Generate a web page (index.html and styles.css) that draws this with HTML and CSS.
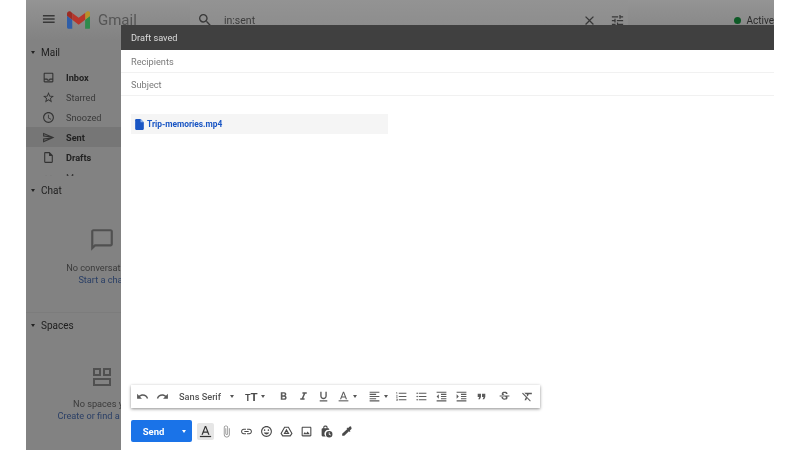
FILE: index.html
```html
<!DOCTYPE html>
<html>
<head>
  <link rel="stylesheet" href="styles.css">
</head>
<body>
  <div class="screen">
    <div class="gmail">
      <div class="topbar">
        <svg class="menu-icon" width="16" height="16" viewBox="0 0 24 24"><path d="M3 18h18v-2H3v2zm0-5h18v-2H3v2zm0-7v2h18V6H3z"/></svg>
        <svg class="logo" width="24" height="18" viewBox="0 0 24 18">
          <path fill="#2f5ea8" d="M1.6 18h3.8V8.8L0 4.7v11.7C0 17.3.7 18 1.6 18z"/>
          <path fill="#2f8a4c" d="M18.6 18h3.8c.9 0 1.6-.7 1.6-1.6V4.7l-5.4 4.1z"/>
          <path fill="#b8912a" d="M18.6 1.7v7.1L24 4.7V2.500c0-2-2.300-3.200-3.900-2z"/>
          <path fill="#b8352b" d="M5.400 8.800V1.700L12 6.700l6.600-5v7.100L12 13.800z"/>
          <path fill="#9c2c24" d="M0 2.500v2.200l5.400 4.100V1.700L3.900.5C2.300-.7 0 .5 0 2.500z"/>
        </svg>
        <span class="wordmark">Gmail</span>
        <div class="search">
          <svg class="search-icon" width="16" height="16" viewBox="0 0 24 24"><path d="M15.500 14h-.79l-.28-.27A6.470 6.470 0 0 0 16 9.500 6.500 6.500 0 1 0 9.500 16c1.610 0 3.090-.59 4.230-1.570l.27.28v.79l5 4.990L20.490 19l-4.990-5zm-6 0C7.010 14 5 11.990 5 9.500S7.010 5 9.500 5 14 7.010 14 9.500 11.990 14 9.500 14z"/></svg>
          <span class="search-text">in:sent</span>
          <svg class="search-close" width="15" height="15" viewBox="0 0 24 24"><path d="M19 6.410 17.590 5 12 10.590 6.410 5 5 6.410 10.590 12 5 17.590 6.410 19 12 13.410 17.590 19 19 17.590 13.410 12z"/></svg>
          <svg class="search-tune" width="15" height="15" viewBox="0 0 24 24"><path d="M3 17v2h6v-2H3zM3 5v2h10V5H3zm10 16v-2h8v-2h-8v-2h-2v6h2zM7 9v2H3v2h4v2h2V9H7zm14 4v-2H11v2h10zm-6-4h2V7h4V5h-4V3h-2v6z"/></svg>
        </div>
        <div class="status"><span class="status-dot"></span>Active</div>
      </div>

      <div class="sidebar">
        <div class="section-head mail-head"><span class="caret"></span>Mail</div>
        <div class="nav">
          <div class="nav-row bold">
            <svg viewBox="0 0 24 24"><path d="M19 3H5c-1.100 0-2 .9-2 2v14c0 1.100.9 2 2 2h14c1.100 0 2-.9 2-2V5c0-1.100-.9-2-2-2zm0 16H5v-3h3.560c.69 1.190 1.970 2 3.450 2s2.750-.81 3.450-2H19v3zm0-5h-4.990c0 1.100-.9 2-2 2s-2-.9-2-2H5V5h14v9z"/></svg>
            Inbox
          </div>
          <div class="nav-row">
            <svg viewBox="0 0 24 24"><path d="m22 9.240-7.190-.62L12 2 9.190 8.630 2 9.240l5.460 4.730L5.820 21 12 17.270 18.180 21l-1.630-7.030L22 9.240zM12 15.400l-3.760 2.270 1-4.280-3.320-2.880 4.380-.38L12 6.100l1.710 4.040 4.380.38-3.320 2.880 1 4.280L12 15.400z"/></svg>
            Starred
          </div>
          <div class="nav-row">
            <svg viewBox="0 0 24 24"><path d="M11.990 2C6.470 2 2 6.480 2 12s4.470 10 9.990 10C17.520 22 22 17.520 22 12S17.520 2 11.990 2zM12 20c-4.420 0-8-3.580-8-8s3.580-8 8-8 8 3.580 8 8-3.580 8-8 8zm.5-13H11v6l5.250 3.150.75-1.230-4.500-2.670z"/></svg>
            Snoozed
          </div>
          <div class="nav-row bold active">
            <svg viewBox="0 0 24 24"><path d="M4.010 6.030l7.510 3.220-7.520-1 .01-2.220m7.500 8.720L4 17.970v-2.220l7.510-1M2.010 3 2 10l15 2-15 2 .01 7L23 12 2.010 3z"/></svg>
            Sent
          </div>
          <div class="nav-row bold">
            <svg viewBox="0 0 24 24"><path d="M14 2H6c-1.100 0-2 .9-2 2v16c0 1.100.9 2 2 2h12c1.100 0 2-.9 2-2V8l-6-6zm4 18H6V4h7v5h5v11z"/></svg>
            Drafts
          </div>
          <div class="nav-row">
            <svg viewBox="0 0 24 24"><path d="M7.410 8.590 12 13.170l4.590-4.580L18 10l-6 6-6-6z"/></svg>
            More
          </div>
        </div>

        <div class="panel chat-panel">
          <div class="section-head"><span class="caret"></span>Chat</div>
          <svg class="panel-icon" width="26" height="26" viewBox="0 0 24 24"><path d="M20 2H4c-1.100 0-2 .9-2 2v18l4-4h14c1.100 0 2-.9 2-2V4c0-1.100-.9-2-2-2zm0 14H5.170L4 17.170V4h16v12z"/></svg>
          <div class="panel-text">No conversations</div>
          <div class="panel-link">Start a chat</div>
        </div>

        <div class="panel spaces-panel">
          <div class="section-head"><span class="caret"></span>Spaces</div>
          <svg class="panel-icon" width="24" height="24" viewBox="0 0 24 24"><path d="M3 3h8v8H3zm2 2v4h4V5zm8-2h8v8h-8zm2 2v4h4V5zM3 13h18v8H3zm2 2v4h14v-4z"/></svg>
          <div class="panel-text">No spaces yet</div>
          <div class="panel-link">Create or find a space</div>
        </div>
      </div>
    </div>

    <div class="compose">
      <div class="compose-head">Draft saved</div>
      <div class="compose-field">Recipients</div>
      <div class="compose-field">Subject</div>
      <div class="compose-body">
        <div class="attachment">
          <svg width="13" height="13" viewBox="0 0 24 24"><path fill="#1a56c4" d="M14 2H6c-1.100 0-2 .9-2 2v16c0 1.100.9 2 2 2h12c1.100 0 2-.9 2-2V8z"/><path fill="#8ab0ea" d="M14 2v6h6z"/></svg>
          <span>Trip-memories.mp4</span>
        </div>
      </div>

      <div class="format-bar">
        <span class="cell"><svg viewBox="0 0 24 24"><path d="M12.500 8c-2.650 0-5.050.99-6.900 2.600L2 7v9h9l-3.620-3.620c1.390-1.160 3.160-1.880 5.120-1.880 3.540 0 6.550 2.310 7.600 5.500l2.370-.78C21.080 11.030 17.150 8 12.500 8z"/></svg></span>
        <span class="cell"><svg viewBox="0 0 24 24"><path d="M18.400 10.600C16.550 8.990 14.150 8 11.500 8c-4.650 0-8.580 3.030-9.960 7.220L3.900 16c1.050-3.190 4.050-5.500 7.600-5.500 1.950 0 3.730.72 5.120 1.880L13 16h9V7z"/></svg></span>
        <span class="font-name">Sans Serif</span>
        <span class="drop font-drop"></span>
        <span class="size-icon"><small>T</small>T</span>
        <span class="drop size-drop"></span>
        <span class="cell bold-cell"><svg viewBox="0 0 24 24"><path d="M15.600 10.790c.97-.67 1.650-1.770 1.650-2.790 0-2.260-1.750-4-4-4H7v14h7.040c2.090 0 3.710-1.700 3.710-3.790 0-1.520-.86-2.820-2.150-3.420zM10 6.500h3c.83 0 1.500.67 1.500 1.500s-.67 1.500-1.500 1.500h-3v-3zm3.500 9H10v-3h3.500c.83 0 1.500.67 1.500 1.500s-.67 1.500-1.500 1.500z"/></svg></span>
        <span class="cell"><svg viewBox="0 0 24 24"><path d="M10 4v3h2.210l-3.420 8H6v3h8v-3h-2.210l3.420-8H18V4z"/></svg></span>
        <span class="cell"><svg viewBox="0 0 24 24"><path d="M12 17c3.310 0 6-2.690 6-6V3h-2.500v8c0 1.930-1.570 3.500-3.500 3.500S8.500 12.930 8.500 11V3H6v8c0 3.310 2.690 6 6 6zm-7 2v2h14v-2H5z"/></svg></span>
        <span class="cell"><svg viewBox="0 0 24 24"><path d="M11 3 5.500 17h2.250l1.120-3h6.250l1.120 3h2.250L13 3h-2zm-1.380 9L12 5.670 14.380 12H9.620z"/><path d="M3 19h18v2H3z"/></svg></span>
        <span class="drop no-gap"></span>
        <span class="cell align-cell"><svg viewBox="0 0 24 24"><path d="M15 15H3v2h12v-2zm0-8H3v2h12V7zM3 13h18v-2H3v2zm0 8h18v-2H3v2zM3 3v2h18V3H3z"/></svg></span>
        <span class="drop no-gap"></span>
        <span class="cell list-cell"><svg viewBox="0 0 24 24"><path d="M2 17h2v.5H3v1h1v.5H2v1h3v-4H2v1zm1-9h1V4H2v1h1v3zm-1 3h1.800L2 13.100v.9h3v-1H3.200L5 10.900V10H2v1zm5-6v2h14V5H7zm0 14h14v-2H7v2zm0-6h14v-2H7v2z"/></svg></span>
        <span class="cell"><svg viewBox="0 0 24 24"><path d="M4 10.500c-.83 0-1.500.67-1.500 1.500s.67 1.500 1.500 1.500 1.500-.67 1.500-1.500-.67-1.500-1.500-1.500zm0-6c-.83 0-1.500.67-1.500 1.500S3.170 7.500 4 7.500 5.500 6.830 5.500 6 4.830 4.500 4 4.500zm0 12c-.83 0-1.500.68-1.500 1.500s.68 1.500 1.500 1.500 1.500-.68 1.500-1.500-.67-1.500-1.500-1.500zM7 19h14v-2H7v2zm0-6h14v-2H7v2zm0-8v2h14V5H7z"/></svg></span>
        <span class="cell"><svg viewBox="0 0 24 24"><path d="M11 17h10v-2H11v2zm-8-5 4 4V8l-4 4zm0 9h18v-2H3v2zM3 3v2h18V3H3zm8 6h10V7H11v2zm0 4h10v-2H11v2z"/></svg></span>
        <span class="cell"><svg viewBox="0 0 24 24"><path d="M3 21h18v-2H3v2zM3 8v8l4-4-4-4zm8 9h10v-2H11v2zM3 3v2h18V3H3zm8 6h10V7H11v2zm0 4h10v-2H11v2z"/></svg></span>
        <span class="cell"><svg viewBox="0 0 24 24"><path d="M6 17h3l2-4V7H5v6h3zm8 0h3l2-4V7h-6v6h3z"/></svg></span>
        <span class="cell wide-gap"><svg viewBox="0 0 24 24"><path d="M7.240 8.750c-.26-.48-.39-1.030-.39-1.670 0-.61.13-1.160.4-1.670.26-.5.63-.93 1.110-1.290.48-.35 1.050-.63 1.700-.83.660-.19 1.390-.29 2.180-.29.810 0 1.540.11 2.210.34.660.22 1.230.54 1.690.94.470.4.830.88 1.080 1.430s.38 1.150.38 1.810h-3.010c0-.31-.05-.59-.15-.85-.09-.27-.24-.49-.44-.68-.2-.19-.45-.33-.75-.44-.3-.1-.66-.16-1.060-.16-.39 0-.74.04-1.030.13s-.53.21-.72.36c-.19.160-.34.340-.44.550-.1.210-.15.430-.15.660 0 .48.250.880.740 1.210.380.250.770.480 1.410.7H7.390c-.050-.080-.110-.170-.150-.250zM21 12v-2H3v2h9.620c.180.070.400.140.550.200.370.170.660.340.870.510s.350.360.430.570c.070.200.110.430.110.690 0 .230-.050.450-.140.660-.090.200-.230.380-.420.530-.190.150-.420.260-.710.350-.290.080-.630.130-1.010.13-.430 0-.830-.040-1.180-.130s-.660-.230-.91-.420c-.250-.190-.45-.44-.59-.75s-.25-.76-.25-1.210H6.400c0 .550.080 1.130.24 1.580s.370.850.650 1.210c.280.350.600.660.980.920.370.260.780.480 1.220.650.440.170.900.300 1.380.390.480.080.960.130 1.440.13.800 0 1.530-.090 2.180-.280s1.210-.450 1.670-.790c.460-.340.820-.770 1.070-1.270s.380-1.070.38-1.710c0-.600-.100-1.140-.310-1.610-.050-.110-.110-.230-.170-.330H21z"/></svg></span>
        <span class="cell wide-gap"><svg viewBox="0 0 24 24"><path d="M3.270 5 2 6.270l6.970 6.970L6.500 19h3l1.570-3.660L16.730 21 18 19.730 3.550 5.270 3.270 5zM6 5v.18L8.820 8h2.400l-.72 1.680 2.100 2.100L14.210 8H20V5H6z"/></svg></span>
      </div>

      <div class="send-bar">
        <div class="send-btn">
          <span class="send-label">Send</span>
          <span class="send-more"><span class="drop white"></span></span>
        </div>
        <span class="text-format">
          <svg width="15" height="15" viewBox="0 0 24 24"><path d="M11 3 5.500 17h2.250l1.120-3h6.250l1.120 3h2.250L13 3h-2zm-1.380 9L12 5.670 14.380 12H9.620z"/><path d="M3 19h18v2H3z"/></svg>
        </span>
        <span class="act first-act"><svg class="clip" viewBox="0 0 24 24"><path d="M16.500 6v11.500c0 2.210-1.790 4-4 4s-4-1.790-4-4V5c0-1.380 1.120-2.500 2.500-2.500s2.500 1.120 2.500 2.500v10.500c0 .55-.45 1-1 1s-1-.45-1-1V6H10v9.500c0 1.380 1.120 2.500 2.500 2.500s2.500-1.120 2.500-2.500V5c0-2.210-1.790-4-4-4S7 2.790 7 5v12.500c0 3.040 2.460 5.500 5.500 5.500s5.500-2.460 5.500-5.500V6h-1.500z"/></svg></span>
        <span class="act"><svg viewBox="0 0 24 24"><path d="M3.900 12c0-1.710 1.390-3.100 3.100-3.100h4V7H7c-2.760 0-5 2.240-5 5s2.240 5 5 5h4v-1.900H7c-1.710 0-3.100-1.390-3.100-3.100zM8 13h8v-2H8v2zm9-6h-4v1.900h4c1.710 0 3.100 1.390 3.100 3.100s-1.390 3.100-3.100 3.100h-4V17h4c2.760 0 5-2.240 5-5s-2.240-5-5-5z"/></svg></span>
        <span class="act"><svg viewBox="0 0 24 24"><path d="M11.990 2C6.470 2 2 6.480 2 12s4.470 10 9.990 10C17.520 22 22 17.520 22 12S17.520 2 11.990 2zM12 20c-4.420 0-8-3.580-8-8s3.580-8 8-8 8 3.580 8 8-3.580 8-8 8zm3.500-9c.83 0 1.500-.67 1.500-1.500S16.330 8 15.500 8 14 8.670 14 9.500s.67 1.500 1.500 1.500zm-7 0c.83 0 1.500-.67 1.500-1.500S9.330 8 8.500 8 7 8.670 7 9.500 7.670 11 8.500 11zm3.500 6.500c2.330 0 4.310-1.460 5.110-3.500H6.890c.8 2.040 2.780 3.500 5.110 3.500z"/></svg></span>
        <span class="act"><svg class="drive" viewBox="0 0 24 24"><path d="M8.500 4h7L22 15.500 19 20H5l-3-4.500z"/><path d="M12 9l-3.800 6.500h7.600z"/></svg></span>
        <span class="act"><svg viewBox="0 0 24 24"><path d="M19 5v14H5V5h14m0-2H5c-1.100 0-2 .9-2 2v14c0 1.100.9 2 2 2h14c1.100 0 2-.9 2-2V5c0-1.100-.9-2-2-2zm-4.860 8.860-3 3.870L9 13.140 6 17h12l-3.860-5.140z"/></svg></span>
        <span class="act"><svg viewBox="0 0 24 24"><path d="M9 1a3 3 0 0 0-3 3v2H5a2 2 0 0 0-2 2v11a2 2 0 0 0 2 2h5.500A7 7 0 0 1 17 9.100V8a2 2 0 0 0-2-2h-1V4a3 3 0 0 0-3-3H9zm0 2h2a1 1 0 0 1 1 1v2H8V4a1 1 0 0 1 1-1z"/><path fill-rule="evenodd" d="M17 11a6 6 0 1 0 0 12 6 6 0 0 0 0-12zm-.8 2.500h1.500v3.200l2.500 1.500-.7 1.200-3.300-2z"/></svg></span>
        <span class="act"><svg viewBox="0 0 24 24"><path d="M20.700 3.300a2.400 2.400 0 0 0-3.400 0l-2.600 2.600-1.200-1.200-1.400 1.400 1.400 1.400L4 16.100V20h3.900l8.600-8.500 1.400 1.400 1.400-1.400-1.200-1.200 2.600-2.600a2.400 2.400 0 0 0 0-3.400z"/></svg></span>
      </div>
    </div>
  </div>
</body>
</html>
```

FILE: styles.css
```css
* {
  box-sizing: border-box;
}

body {
  margin: 0;
  background: #fff;
  font-family: Roboto, "Liberation Sans", sans-serif;
  overflow: hidden;
}

.screen {
  position: relative;
  width: 748px;
  height: 450px;
  margin-left: 26px;
  overflow: hidden;
  filter: blur(0.35px);
}

.gmail {
  height: 100%;
  background: #828282;
  color: #2a2a2a;
  display: flex;
  flex-direction: column;
}

.topbar {
  height: 40px;
  flex-shrink: 0;
  display: flex;
  align-items: center;
  padding-left: 15px;
  background: linear-gradient(#949494, #828282);
}

.topbar svg {
  fill: #383838;
}

.menu-icon {
  margin-top: -2px;
}

.logo {
  margin-left: 10px;
  margin-top: -1px;
}

.wordmark {
  width: 37px;
  margin-left: 8px;
  font-size: 15px;
  color: #555;
  white-space: nowrap;
}

.search {
  width: 450px;
  height: 40px;
  margin-left: 55px;
  padding-left: 7px;
  display: flex;
  align-items: center;
  background: linear-gradient(#939393, #8a8a8a);
}

.search-text {
  margin-left: 11px;
  margin-top: 1px;
  font-size: 10.500px;
  color: #3c3c3c;
}

.search-close {
  margin-left: auto;
}

.search-tune {
  margin-left: 13px;
  margin-right: 3px;
}

.status {
  margin-left: 106px;
  display: flex;
  align-items: center;
  font-size: 10px;
  color: #2a2a2a;
  white-space: nowrap;
}

.status-dot {
  width: 7px;
  height: 7px;
  margin-right: 5px;
  border-radius: 50%;
  background: #0d5a26;
}

.sidebar {
  width: 152px;
  flex: 1;
  display: flex;
  flex-direction: column;
  font-size: 10px;
}

.section-head {
  height: 20px;
  display: flex;
  align-items: center;
  padding-left: 5px;
  font-size: 10px;
  color: #1e1e1e;
}

.mail-head {
  margin-top: 2px;
}

.caret {
  width: 0;
  height: 0;
  margin-right: 6px;
  border-left: 2.500px solid transparent;
  border-right: 2.500px solid transparent;
  border-top: 3px solid #222;
}

.nav {
  height: 114px;
  padding-top: 5px;
  overflow: hidden;
}

.nav-row {
  height: 20px;
  display: flex;
  align-items: center;
  padding-left: 16px;
  gap: 11px;
  font-size: 9.200px;
  color: #3a3a3a;
}

.nav-row svg {
  width: 13px;
  height: 13px;
  fill: #333;
  flex-shrink: 0;
}

.nav-row.bold {
  font-weight: 700;
  color: #222;
}

.nav-row.active {
  background: #767676;
}

.panel {
  display: flex;
  flex-direction: column;
  align-items: center;
}

.panel .section-head {
  align-self: stretch;
}

.chat-panel {
  height: 137px;
  padding-top: 4px;
  border-bottom: 1px solid #7c7c7c;
  background: #828282;
}

.panel-icon {
  fill: #505050;
}

.chat-panel .panel-icon {
  margin-top: 27px;
}

.spaces-panel {
  padding-top: 2px;
}

.spaces-panel .panel-icon {
  margin-top: 30px;
}

.panel-text {
  margin-top: 9px;
  font-size: 9.200px;
  color: #3a3a3a;
  white-space: nowrap;
}

.panel-link {
  margin-top: 1px;
  font-size: 9.200px;
  color: #2a3f66;
  white-space: nowrap;
}

.compose {
  position: absolute;
  left: 95px;
  top: 25px;
  width: 653px;
  height: 425px;
  display: flex;
  flex-direction: column;
  background: #fff;
}

.compose-head {
  height: 25px;
  flex-shrink: 0;
  display: flex;
  align-items: center;
  padding-left: 10px;
  background: #404040;
  color: #dcdcdc;
  font-size: 9.200px;
}

.compose-field {
  height: 23px;
  flex-shrink: 0;
  display: flex;
  align-items: center;
  padding-left: 10px;
  border-bottom: 1px solid #f1f1f1;
  color: #7a7a7a;
  font-size: 9.200px;
}

.compose-body {
  flex: 1;
  padding: 18px 0 0 10px;
}

.attachment {
  width: 257px;
  height: 20px;
  display: flex;
  align-items: center;
  padding-left: 2px;
  gap: 1px;
  background: #f5f5f5;
  color: #1a56c4;
  font-size: 8.400px;
  font-weight: 700;
}

.format-bar {
  width: 409px;
  height: 23px;
  margin-left: 10px;
  flex-shrink: 0;
  display: flex;
  align-items: center;
  padding-left: 1px;
  background: #fff;
  box-shadow: 0 1px 3px rgba(0, 0, 0, 0.45);
}

.cell {
  width: 20px;
  flex-shrink: 0;
  display: flex;
  justify-content: center;
}

.cell svg {
  width: 13px;
  height: 13px;
  fill: #5a5a5a;
}

.bold-cell {
  margin-left: 8px;
}

.align-cell {
  margin-left: 7px;
}

.list-cell {
  margin-left: 3.500px;
}

.wide-gap {
  margin-left: 3px;
}

.font-name {
  width: 41px;
  margin-left: 7px;
  flex-shrink: 0;
  font-size: 9.200px;
  font-weight: 500;
  color: #555;
  white-space: nowrap;
}

.size-icon {
  width: 12px;
  margin-left: 11px;
  flex-shrink: 0;
  font-size: 11.500px;
  font-weight: 700;
  color: #4a4a4a;
  white-space: nowrap;
}

.size-icon small {
  font-size: 9px;
}

.drop {
  width: 0;
  height: 0;
  margin-left: 3px;
  flex-shrink: 0;
  border-left: 2.500px solid transparent;
  border-right: 2.500px solid transparent;
  border-top: 3px solid #555;
}

.drop.font-drop {
  margin-left: 10px;
}

.drop.size-drop {
  margin-left: 4px;
}

.drop.no-gap {
  margin-left: 0;
}

.drop.white {
  margin: 0;
  border-top-color: #fff;
}

.send-bar {
  height: 42px;
  flex-shrink: 0;
  display: flex;
  align-items: center;
  padding: 4px 0 0 10px;
}

.send-btn {
  width: 61px;
  height: 22px;
  display: flex;
  align-items: center;
  background: #1a73e8;
  border-radius: 2px;
  color: #fff;
  font-size: 9.500px;
  font-weight: 700;
}

.send-label {
  flex: 1;
  text-align: center;
}

.send-more {
  width: 16px;
  display: flex;
  justify-content: center;
}

.text-format {
  width: 17px;
  height: 17px;
  margin-left: 5px;
  display: flex;
  align-items: center;
  justify-content: center;
  background: #e6e6e6;
  border-radius: 2px;
}

.text-format svg {
  fill: #333;
}

.act {
  width: 20px;
  flex-shrink: 0;
  display: flex;
  justify-content: center;
}

.first-act {
  margin-left: 2px;
}

.act svg {
  width: 13px;
  height: 13px;
  fill: #4a4a4a;
}

.act .clip {
  fill: #8a8a8a;
}

.act .drive {
  fill: none;
  stroke: #4a4a4a;
  stroke-width: 2;
}
```
